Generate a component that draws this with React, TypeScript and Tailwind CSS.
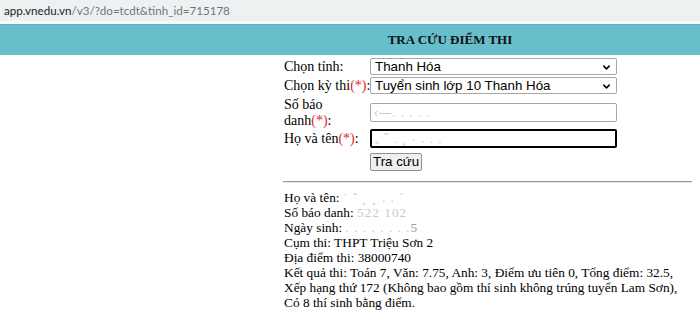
import { ChevronDown } from "lucide-react";

const serif = { fontFamily: '"Liberation Serif", "Times New Roman", serif' };
const arial = { fontFamily: '"Liberation Sans", Arial, sans-serif' };

function Select({ value }: { value: string }) {
  return (
    <div
      className="relative flex h-[17px] w-[247px] items-center rounded-[2px] border border-[#a6a6a6] bg-white pl-[4px] text-[13.33px] text-black"
      style={arial}
    >
      <span className="leading-none">{value}</span>
      <ChevronDown className="absolute right-[4px] top-[3px] text-black" size={11} strokeWidth={3.2} />
    </div>
  );
}

function Req() {
  return <span className="text-[#e0281c]">(*)</span>;
}

// redacted marks, kept faint like in the screenshot
function Blur({ text }: { text: string }) {
  return <span className="text-[#c9c9c9] tracking-[1px]">{text}</span>;
}

export default function App() {
  const results = [
    "Cụm thi: THPT Triệu Sơn 2",
    "Địa điểm thi: 38000740",
    "Kết quả thi: Toán 7, Văn: 7.75, Anh: 3, Điểm ưu tiên 0, Tổng điểm: 32.5,",
    "Xếp hạng thứ 172 (Không bao gồm thí sinh không trúng tuyển Lam Sơn),",
    "Có 8 thí sinh bằng điểm.",
  ];

  return (
    <div className="h-[336px] w-[700px] overflow-hidden bg-white text-black">
      {/* address bar */}
      <div
        className="flex h-[21px] items-center bg-[#eef1f2] pl-[4px] text-[11.6px]"
        style={{ fontFamily: 'Lato, "Noto Sans", sans-serif' }}
      >
        <span className="text-[#202124]">app.vnedu.vn</span>
        <span className="text-[#70757a]">/v3/?do=tcdt&amp;tinh_id=715178</span>
      </div>
      <div className="h-[3px] bg-[#fdf8f9]" />

      {/* header */}
      <div className="flex h-[31px] items-center border-t border-[#5eb3bf] bg-[#67bfcb] pl-[283px]">
        <div className="w-[334px] text-center text-[13px] font-bold text-[#111]" style={serif}>
          TRA CỨU ĐIỂM THI
        </div>
      </div>

      {/* form */}
      <div className="pl-[284px] pt-[3px] text-[14px] leading-[16px]" style={serif}>
        <div className="flex h-[17px] items-center">
          <div className="w-[86px]">Chọn tỉnh:</div>
          <Select value="Thanh Hóa" />
        </div>
        <div className="mt-[2px] flex h-[17px] items-center">
          <div className="w-[86px] whitespace-nowrap">
            Chọn kỳ thi<Req />:
          </div>
          <Select value="Tuyển sinh lớp 10 Thanh Hóa" />
        </div>
        <div className="mt-[3px] flex h-[31px] items-center">
          <div className="w-[86px]">
            Số báo
            <br />
            danh<Req />:
          </div>
          <div
            className="flex h-[19px] w-[247px] items-center rounded-[2px] border border-[#a6a6a6] pl-[3px] text-[12px]"
            style={arial}
          >
            <Blur text="‹—. . . . ." />
          </div>
        </div>
        <div className="mt-[1px] flex h-[19px] items-center">
          <div className="w-[86px] whitespace-nowrap">
            Họ và tên<Req />:
          </div>
          <div
            className="flex h-[19px] w-[247px] items-center rounded-[2px] border-2 border-black pl-[3px] text-[12px]"
            style={arial}
          >
            <Blur text="„ ˜ . ¸ · . . ." />
          </div>
        </div>
        <div className="mt-[5px] flex h-[18px] items-center">
          <div className="w-[86px]" />
          <button
            className="h-[18px] rounded-[2px] border border-[#8f8f8f] bg-[#efefef] px-[2px] text-[13.33px] leading-none text-black"
            style={arial}
          >
            Tra cứu
          </button>
        </div>
      </div>

      <div className="ml-[283px] mt-[10px] h-[2px] w-[409px] border-t border-b border-t-[#9a9a9a] border-b-[#e4e4e4]" />

      {/* results */}
      <div className="pl-[284px] pt-[7px] text-[13.33px] leading-[15px]" style={serif}>
        <div>
          Họ và tên: <Blur text="˙ ˜ ˛ ˛ . . ´" />
        </div>
        <div>
          Số báo danh: <Blur text="522 102" />
        </div>
        <div>
          Ngày sinh: <Blur text=". . . . . . . ." />
          <span className="text-[#9a9a9a]">5</span>
        </div>
        {results.map((line) => (
          <div key={line}>{line}</div>
        ))}
      </div>
    </div>
  );
}
